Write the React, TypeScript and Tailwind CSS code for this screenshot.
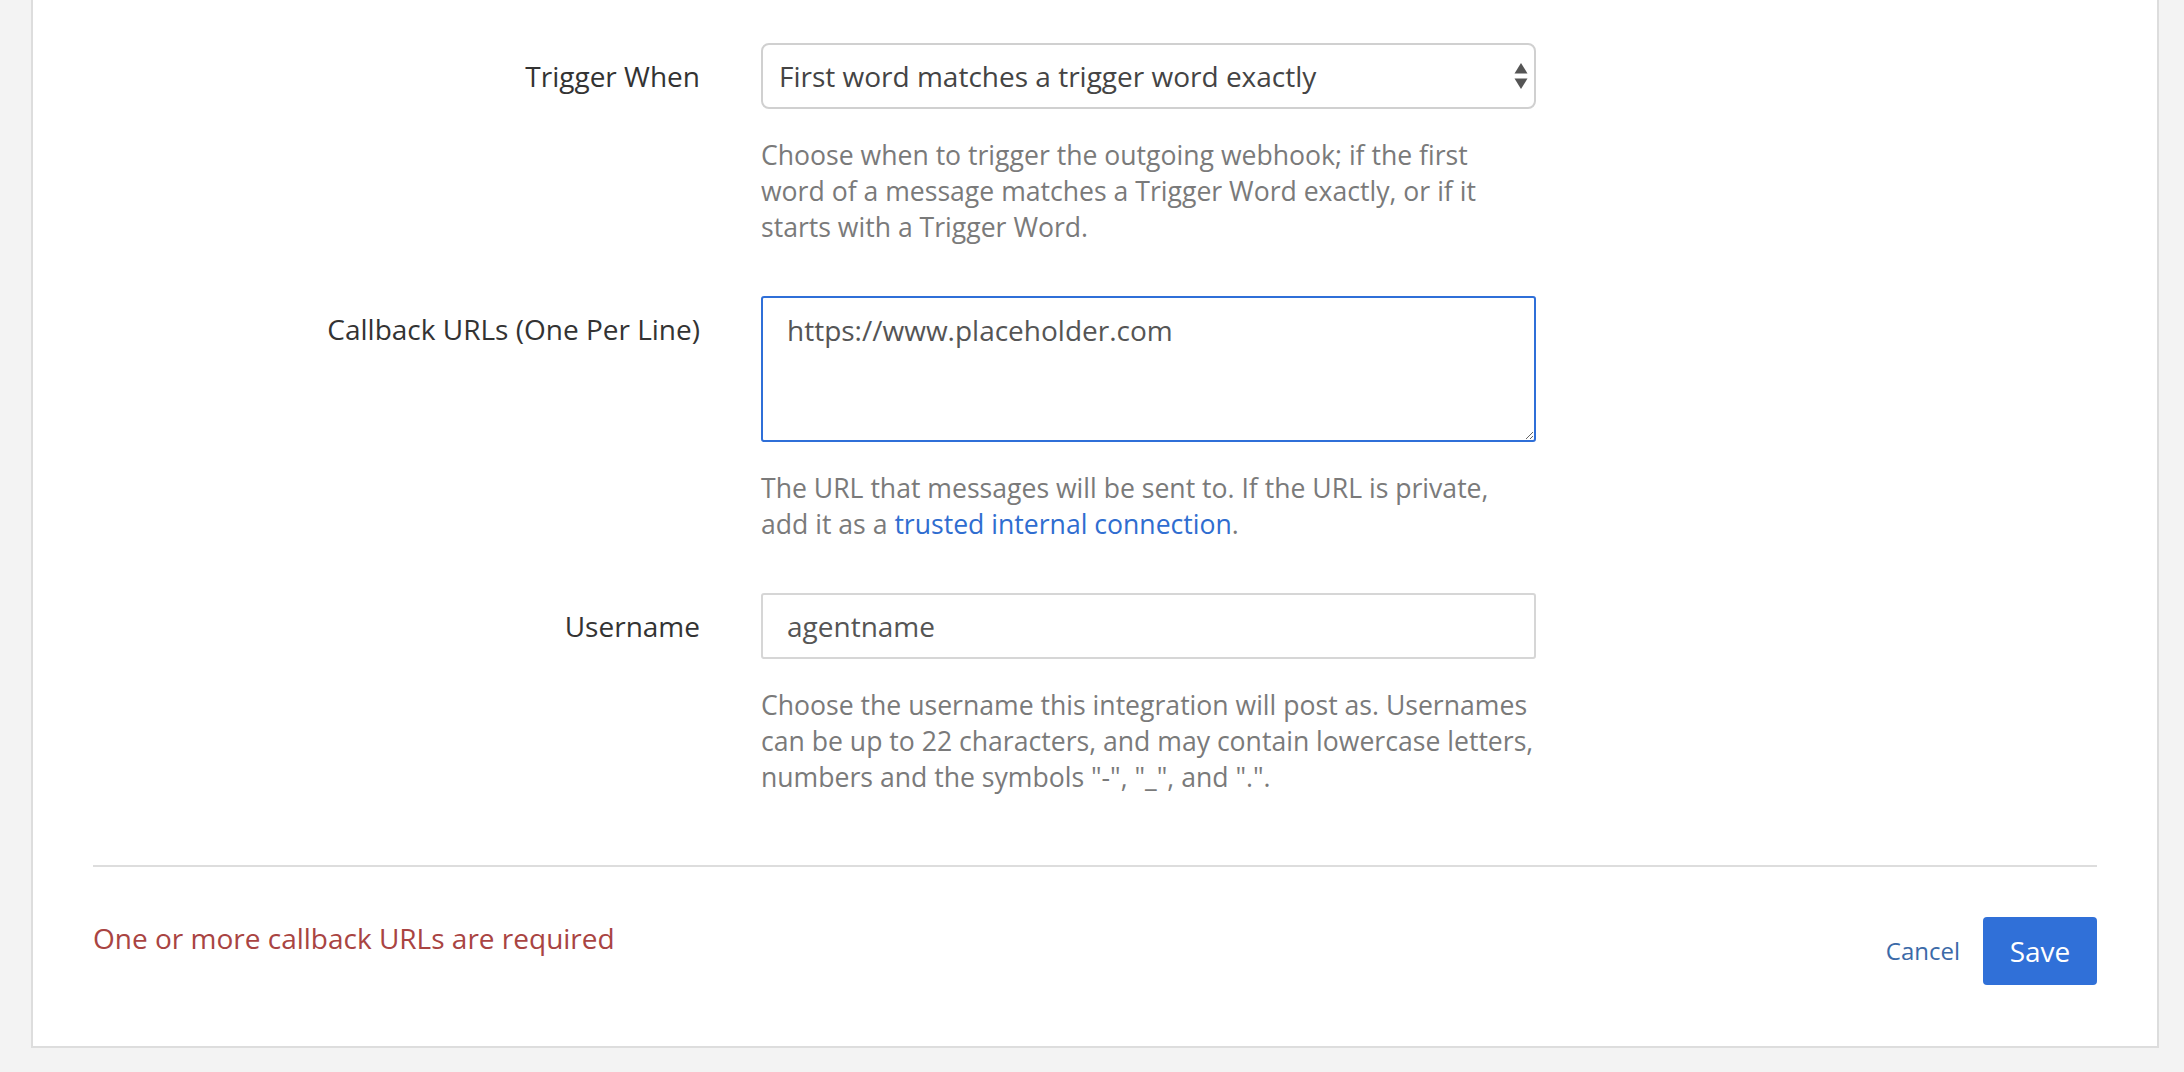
import { useState } from "react";

function SelectArrows() {
    return (
        <svg width="14" height="26" viewBox="0 0 14 26" className="pointer-events-none absolute right-[8px] top-1/2 -translate-y-1/2">
            <path d="M7 0 L13.5 10.5 L0.5 10.5 Z" fill="#555" />
            <path d="M7 26 L13.5 15.5 L0.5 15.5 Z" fill="#555" />
        </svg>
    );
}

function Row({ label, children, help }: { label: string; children: React.ReactNode; help: React.ReactNode }) {
    return (
        <div className="flex">
            <label className="w-[668px] shrink-0 pr-[61px] pt-[14px] text-right text-[28px] leading-[38px] text-[#333333]">
                {label}
            </label>
            <div className="w-[775px]">
                {children}
                <div className="mt-[28px] text-[26.6px] leading-[36px] text-[#7a7a7a]">{help}</div>
            </div>
        </div>
    );
}

export default function App() {
    const [trigger, setTrigger] = useState("exact");
    const [urls, setUrls] = useState("https://www.placeholder.com");
    const [username, setUsername] = useState("agentname");

    return (
        <div className="min-h-screen bg-[#f3f3f3] pb-[25px] font-['Open_Sans',sans-serif]">
            <div className="ml-[31px] mr-[25px] border-2 border-t-0 border-[#dddddd] bg-white px-[60px] pt-[43px] pb-[61px]">
                <div className="flex flex-col gap-[51px]">
                    <Row
                        label="Trigger When"
                        help={
                            <>
                                Choose when to trigger the outgoing webhook; if the first
                                <br />
                                word of a message matches a Trigger Word exactly, or if it
                                <br />
                                starts with a Trigger Word.
                            </>
                        }
                    >
                        <div className="relative">
                            <select
                                value={trigger}
                                onChange={(e) => setTrigger(e.target.value)}
                                className="h-[66px] w-full appearance-none rounded-[8px] border-2 border-[#d0d0d0] bg-white pl-[16px] text-[28px] text-[#444444] outline-none"
                            >
                                <option value="exact">First word matches a trigger word exactly</option>
                                <option value="start">First word starts with a trigger word</option>
                            </select>
                            <SelectArrows />
                        </div>
                    </Row>

                    <Row
                        label="Callback URLs (One Per Line)"
                        help={
                            <>
                                The URL that messages will be sent to. If the URL is private,
                                <br />
                                add it as a <a className="text-[#2f6dd0]">trusted internal connection</a>.
                            </>
                        }
                    >
                        <textarea
                            value={urls}
                            onChange={(e) => setUrls(e.target.value)}
                            className="block h-[146px] w-full resize-y rounded-[3px] border-2 border-[#2f6fd8] px-[24px] py-[12px] text-[28px] leading-[40px] text-[#555555] outline-none"
                        />
                    </Row>

                    <Row
                        label="Username"
                        help={
                            <>
                                Choose the username this integration will post as. Usernames
                                <br />
                                can be up to 22 characters, and may contain lowercase letters,
                                <br />
                                numbers and the symbols "-", "_", and ".".
                            </>
                        }
                    >
                        <input
                            value={username}
                            onChange={(e) => setUsername(e.target.value)}
                            className="block h-[66px] w-full rounded-[3px] border-2 border-[#d6d6d6] px-[24px] text-[28px] text-[#555555] outline-none"
                        />
                    </Row>
                </div>

                <div className="mt-[70px] border-t-2 border-[#dddddd]" />

                <div className="mt-[50px] flex items-center justify-between">
                    <p className="-mt-[26px] text-[28px] text-[#a94442]">One or more callback URLs are required</p>
                    <div className="flex items-center gap-[23px]">
                        <button className="text-[24px] text-[#3b6aa8]">Cancel</button>
                        <button className="h-[68px] w-[114px] rounded-[4px] bg-[#3070d8] text-[28px] text-white">Save</button>
                    </div>
                </div>
            </div>
        </div>
    );
}
